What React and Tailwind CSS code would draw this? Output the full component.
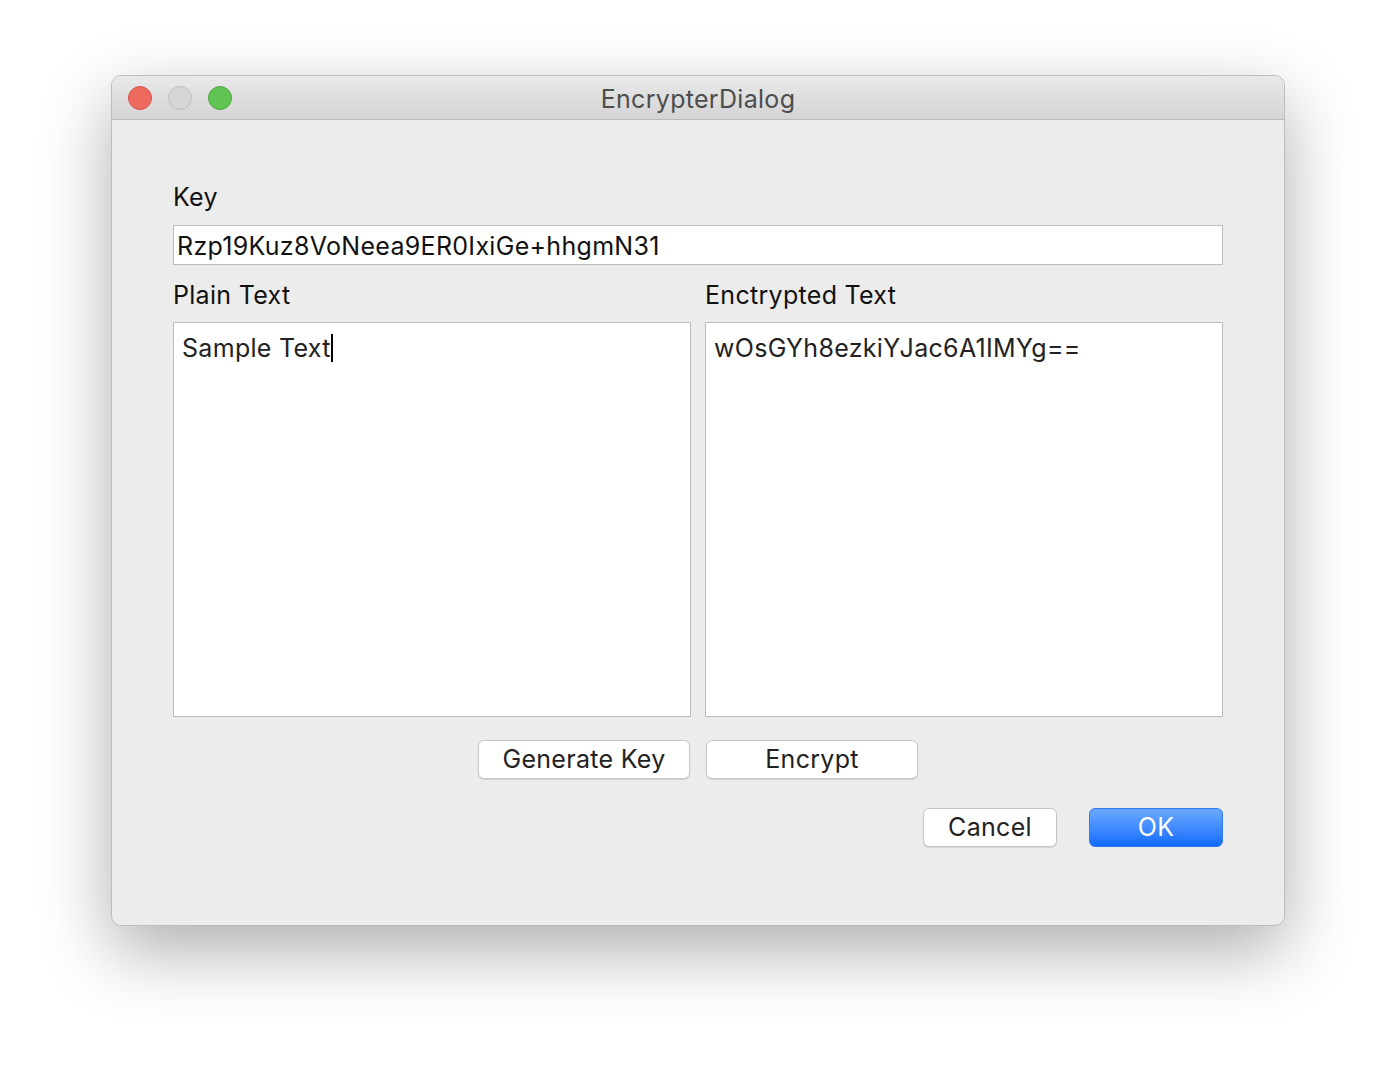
import React from "react";

const font = { fontFamily: "Inter, 'Liberation Sans', sans-serif" };

const MacButton = ({ children, primary, className = "" }) => (
  <button
    className={`h-[39px] rounded-[6px] text-[25px] tracking-[0.3px] leading-none flex items-center justify-center ${
      primary
        ? "bg-gradient-to-b from-[#6ba8fe] to-[#0b6bff] text-white border border-[#2f7cf0]"
        : "bg-white text-[#222] border border-[#c6c6c6] shadow-[0_1px_1px_rgba(0,0,0,0.12)]"
    } ${className}`}
  >
    {children}
  </button>
);

const TrafficLight = ({ color, border }) => (
  <span className={`w-[24px] h-[24px] rounded-full border ${color} ${border}`} />
);

export default function App() {
  return (
    <div className="min-h-screen bg-white pt-[75px] pl-[111px]" style={font}>
      <div className="w-[1174px] h-[851px] rounded-[10px] bg-[#ececec] border border-[#bdbdbd] shadow-[0_25px_70px_rgba(0,0,0,0.32)] overflow-hidden flex flex-col">
        {/* title bar */}
        <div className="h-[44px] bg-gradient-to-b from-[#e9e9e9] to-[#d4d4d4] border-b border-[#b9b9b9] relative flex items-center justify-center">
          <div className="absolute left-[16px] top-[10px] flex gap-[16px]">
            <TrafficLight color="bg-[#ee6a5f]" border="border-[#d5524a]" />
            <TrafficLight color="bg-[#d6d6d6]" border="border-[#c0c0c0]" />
            <TrafficLight color="bg-[#5fc454]" border="border-[#4aa83f]" />
          </div>
          <span className="pt-[4px] text-[25px] tracking-[0.3px] text-[#4d4d4d] leading-none">EncrypterDialog</span>
        </div>

        {/* body */}
        <div className="pt-[58px] pl-[61px] pr-[61px] flex flex-col text-[25px] tracking-[0.3px]">
          <div className="h-[36px] pt-[4px] flex items-center text-[#111]">Key</div>
          <div className="mt-[11px] h-[40px] bg-white border border-[#bcbcbc] flex items-center pl-[3px] pt-[3px] text-[#111]">
            Rzp19Kuz8VoNeea9ER0IxiGe+hhgmN31
          </div>

          <div className="mt-[12px] grid grid-cols-2 gap-[14px]">
            <div className="flex flex-col">
              <div className="h-[36px] pt-[2px] flex items-center text-[#111]">Plain Text</div>
              <div className="mt-[9px] h-[395px] bg-white border border-[#bcbcbc] pl-[8px] pt-[9px] text-[#222] leading-[32px]">
                Sample Text<span className="inline-block w-[2px] h-[28px] bg-black align-middle -mt-[4px]" />
              </div>
            </div>
            <div className="flex flex-col">
              <div className="h-[36px] pt-[2px] flex items-center text-[#111]">Enctrypted Text</div>
              <div className="mt-[9px] h-[395px] bg-white border border-[#bcbcbc] pl-[8px] pt-[9px] text-[#222] leading-[32px]">
                wOsGYh8ezkiYJac6A1IMYg==
              </div>
            </div>
          </div>

          <div className="mt-[23px] flex justify-center gap-[16px]">
            <MacButton className="w-[212px]">Generate Key</MacButton>
            <MacButton className="w-[212px]">Encrypt</MacButton>
          </div>

          <div className="mt-[29px] flex justify-end gap-[32px]">
            <MacButton className="w-[134px]">Cancel</MacButton>
            <MacButton primary className="w-[134px]">OK</MacButton>
          </div>
        </div>
      </div>
    </div>
  );
}
